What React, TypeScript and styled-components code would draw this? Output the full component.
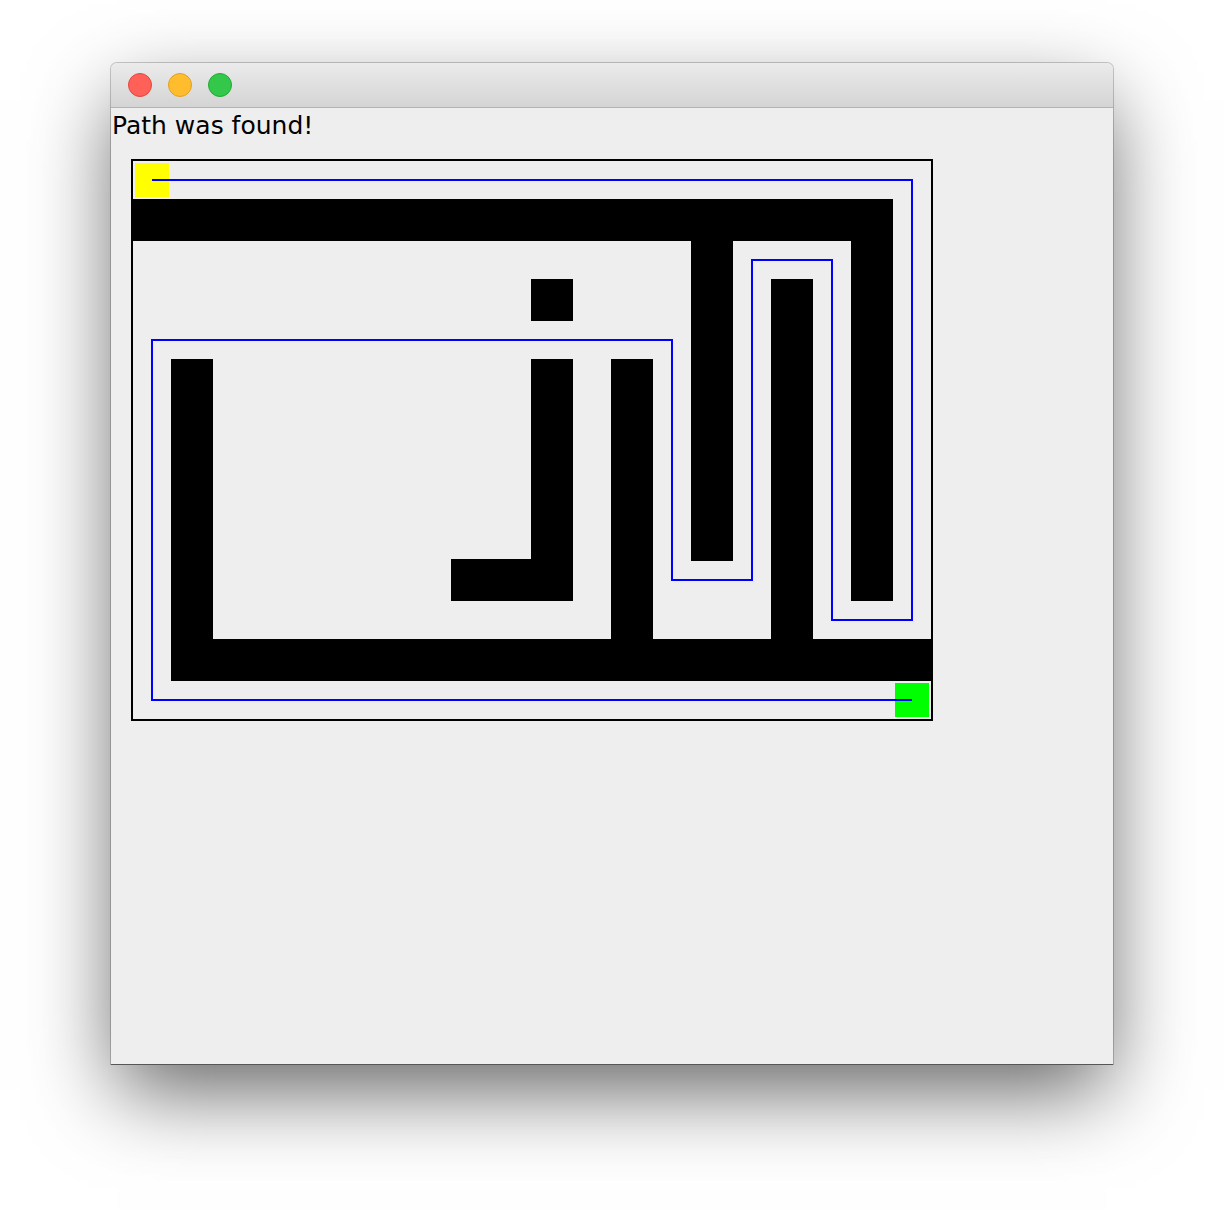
import styled, { createGlobalStyle } from 'styled-components'

const GlobalStyle = createGlobalStyle`
  html, body {
    margin: 0;
    padding: 0;
    background: #ffffff;
  }
`

const CELL = 40

// '#' wall, 'S' start, 'G' goal
const MAZE = [
  'S...................',
  '###################.',
  '..............#...#.',
  '..........#...#.#.#.',
  '..............#.#.#.',
  '.#........#.#.#.#.#.',
  '.#........#.#.#.#.#.',
  '.#........#.#.#.#.#.',
  '.#........#.#.#.#.#.',
  '.#........#.#.#.#.#.',
  '.#......###.#...#.#.',
  '.#..........#...#...',
  '.###################',
  '...................G',
]

const PATH: [number, number][] = [
  [0, 0], [19, 0], [19, 11], [17, 11], [17, 2], [15, 2], [15, 10],
  [13, 10], [13, 4], [0, 4], [0, 13], [19, 13],
]

const Desktop = styled.div`
  width: 1224px;
  height: 1224px;
  padding: 63px 0 0 111px;
  box-sizing: border-box;
`

const Window = styled.div`
  width: 1002px;
  height: 1001px;
  display: flex;
  flex-direction: column;
  border-radius: 6px 6px 0 0;
  background: #eeeeee;
  box-shadow: 0 0 0 1px rgba(0, 0, 0, 0.2), 0 1px 0 #6c6c6c,
    0 32px 80px -6px rgba(0, 0, 0, 0.62);
  overflow: hidden;
`

const TitleBar = styled.div`
  height: 44px;
  flex: none;
  display: flex;
  align-items: center;
  gap: 16px;
  padding-left: 17px;
  background: linear-gradient(#ebebeb, #d4d4d4);
  border-bottom: 1px solid #b3b3b3;
`

const Light = styled.div<{ $fill: string; $edge: string }>`
  width: 22px;
  height: 22px;
  border-radius: 50%;
  background: ${(p) => p.$fill};
  border: 1px solid ${(p) => p.$edge};
`

const Content = styled.div`
  flex: 1;
  display: flex;
  flex-direction: column;
  align-items: flex-start;
  padding: 4px 0 0 1px;
`

const Status = styled.div`
  font-family: 'DejaVu Sans', 'Liberation Sans', sans-serif;
  font-size: 25px;
  line-height: 27px;
  color: #000000;
`

const Board = styled.div`
  position: relative;
  margin: 20px 0 0 19px;
  width: 802px;
  height: 562px;
  display: grid;
  grid-template-columns: repeat(20, ${CELL}px);
  grid-template-rows: repeat(14, ${CELL}px);
  box-shadow: inset 0 0 0 2px #000000;
`

const Wall = styled.div`
  width: 42px;
  height: 42px;
  background: #000000;
`

const Marker = styled.div<{ $color: string }>`
  width: 34px;
  height: 34px;
  margin: 4px 0 0 4px;
  background: ${(p) => p.$color};
`

const PathLayer = styled.svg`
  position: absolute;
  inset: 0;
  pointer-events: none;
`

export default function App() {
  const cells: JSX.Element[] = []
  MAZE.forEach((row, r) => {
    row.split('').forEach((ch, c) => {
      const place = { gridColumn: c + 1, gridRow: r + 1 }
      if (ch === '#') cells.push(<Wall key={`${r}-${c}`} style={place} />)
      if (ch === 'S') cells.push(<Marker key="start" $color="#ffff00" style={place} />)
      if (ch === 'G') cells.push(<Marker key="goal" $color="#00ff00" style={place} />)
    })
  })

  const points = PATH.map(([c, r]) => `${21 + c * CELL},${21 + r * CELL}`).join(' ')

  return (
    <>
      <GlobalStyle />
      <Desktop>
        <Window>
          <TitleBar>
            <Light $fill="#ff6159" $edge="#e2463f" />
            <Light $fill="#ffbd2e" $edge="#e0a027" />
            <Light $fill="#34c84a" $edge="#22a834" />
          </TitleBar>
          <Content>
            <Status>Path was found!</Status>
            <Board>
              {cells}
              <PathLayer width="802" height="562" viewBox="0 0 802 562">
                <polyline points={points} fill="none" stroke="#0000ff" strokeWidth="2" />
              </PathLayer>
            </Board>
          </Content>
        </Window>
      </Desktop>
    </>
  )
}
